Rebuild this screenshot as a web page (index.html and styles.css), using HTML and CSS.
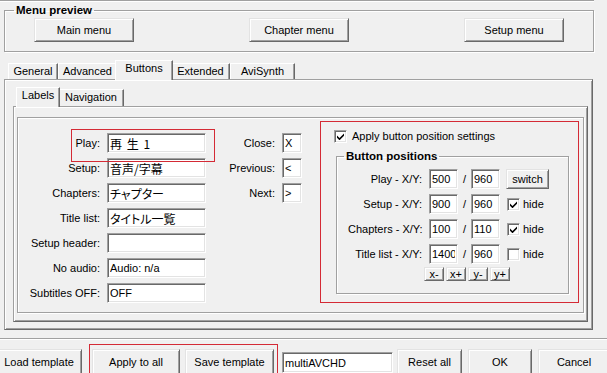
FILE: index.html
```html
<!DOCTYPE html>
<html lang="en">
<head>
<meta charset="utf-8">
<title>Menu preview</title>
<link rel="stylesheet" href="styles.css">
</head>
<body>
<div class="dialog">
  <div class="topline"></div>
  <fieldset class="group menu-preview">
    <legend>Menu preview</legend>
    <div class="preview-buttons">
      <button class="btn preview-btn">Main menu</button>
      <button class="btn preview-btn">Chapter menu</button>
      <button class="btn preview-btn">Setup menu</button>
    </div>
  </fieldset>

  <div class="tabs outer-tabs">
    <div class="tab tab-general">General</div>
    <div class="tab tab-advanced">Advanced</div>
    <div class="tab sel tab-buttons">Buttons</div>
    <div class="tab tab-extended">Extended</div>
    <div class="tab tab-avisynth">AviSynth</div>
  </div>

  <div class="panel outer-panel">
    <div class="tabs inner-tabs">
      <div class="tab sel tab-labels">Labels</div>
      <div class="tab tab-navigation">Navigation</div>
    </div>
    <div class="panel inner-panel">
      <div class="labels-box">
        <div class="form form-left">
          <label class="lbl">Play:</label><input class="field cjk" value="再 生 1">
          <label class="lbl">Setup:</label><input class="field cjk" value="音声/字幕">
          <label class="lbl">Chapters:</label><input class="field cjk" value="チャプター">
          <label class="lbl">Title list:</label><input class="field cjk" value="タイトル一覧">
          <label class="lbl">Setup header:</label><input class="field" value="">
          <label class="lbl">No audio:</label><input class="field" value="Audio: n/a">
          <label class="lbl">Subtitles OFF:</label><input class="field" value="OFF">
        </div>
        <div class="form form-mid">
          <label class="lbl">Close:</label><input class="field" value="X">
          <label class="lbl">Previous:</label><input class="field" value="&lt;">
          <label class="lbl">Next:</label><input class="field" value="&gt;">
        </div>
        <div class="positions">
          <div class="check-row">
            <span class="cb"><svg width="7" height="7" viewBox="0 0 7 7"><path d="M0 2.5 L2.5 5 L7 0.5 L7 2.8 L2.5 7.3 L0 4.8 Z" fill="#000"/></svg></span>
            <span>Apply button position settings</span>
          </div>
          <fieldset class="group pos-group">
            <legend>Button positions</legend>
            <div class="pos-body">
              <div class="pos-grid">
                <span class="plbl">Play - X/Y:</span><input class="field num" value="500"><span class="slash">/</span><input class="field num" value="960">
                <span class="pctl"><button class="btn switch-btn">switch</button></span>

                <span class="plbl">Setup - X/Y:</span><input class="field num" value="900"><span class="slash">/</span><input class="field num" value="960">
                <span class="pctl"><span class="hide"><span class="cb"><svg width="7" height="7" viewBox="0 0 7 7"><path d="M0 2.5 L2.5 5 L7 0.5 L7 2.8 L2.5 7.3 L0 4.8 Z" fill="#000"/></svg></span>hide</span></span>

                <span class="plbl">Chapters - X/Y:</span><input class="field num" value="100"><span class="slash">/</span><input class="field num" value="110">
                <span class="pctl"><span class="hide"><span class="cb"><svg width="7" height="7" viewBox="0 0 7 7"><path d="M0 2.5 L2.5 5 L7 0.5 L7 2.8 L2.5 7.3 L0 4.8 Z" fill="#000"/></svg></span>hide</span></span>

                <span class="plbl">Title list - X/Y:</span><input class="field num" value="1400"><span class="slash">/</span><input class="field num" value="960">
                <span class="pctl"><span class="hide"><span class="cb"></span>hide</span></span>
              </div>
              <div class="nudge">
                <button class="btn nudge-btn">x-</button>
                <button class="btn nudge-btn">x+</button>
                <button class="btn nudge-btn">y-</button>
                <button class="btn nudge-btn">y+</button>
              </div>
            </div>
          </fieldset>
        </div>
        <div class="mark mark-play"></div>
        <div class="mark mark-pos"></div>
      </div>
    </div>
  </div>

  <div class="separator"></div>

  <div class="footer">
    <button class="btn fbtn b-load">Load template</button>
    <button class="btn fbtn b-apply">Apply to all</button>
    <button class="btn fbtn b-save">Save template</button>
    <input class="field f-name" value="multiAVCHD">
    <button class="btn fbtn b-reset">Reset all</button>
    <button class="btn fbtn b-ok">OK</button>
    <button class="btn fbtn b-cancel">Cancel</button>
    <div class="mark mark-footer"></div>
  </div>
</div>
</body>
</html>
```
FILE: styles.css
```css
* { box-sizing: border-box; }
html, body { margin: 0; padding: 0; }
body {
  width: 607px;
  height: 373px;
  overflow: hidden;
  background: #f0f0f0;
  font-family: "Liberation Sans", Arial, sans-serif;
  font-size: 11px;
  line-height: 13px;
  color: #000;
}
.dialog { position: relative; }

.topline {
  width: 594px;
  height: 2px;
  border-top: 1px solid #a0a0a0;
  border-bottom: 1px solid #fff;
}

/* group boxes */
.group {
  margin: 0;
  padding: 0;
  min-inline-size: 0;
  border: 1px solid #a0a0a0;
  box-shadow: inset 1px 1px 0 #fff, 1px 1px 0 #fff;
}
.group > legend {
  padding: 0 2px;
  font-weight: bold;
  font-size: 11.5px;
  line-height: 14px;
}
.menu-preview { margin: 1px 0 0 4px; width: 590px; }
.menu-preview > legend { margin-left: 9px; }
.preview-buttons {
  display: flex;
  justify-content: space-between;
  padding: 1px 29px 9px;
}

/* buttons */
.btn {
  font: inherit;
  color: #000;
  background: #f0f0f0;
  padding: 0;
  margin: 0;
  border: 1px solid;
  border-color: #e3e3e3 #696969 #696969 #e3e3e3;
  box-shadow: inset 1px 1px 0 #fff, inset -1px -1px 0 #a0a0a0;
  height: 24px;
  border-radius: 0;
}
.preview-btn { width: 100px; }

/* tabs */
.tabs { display: flex; align-items: flex-end; }
.tab {
  height: 16px;
  padding-top: 1px;
  text-align: center;
  background: #f0f0f0;
  border-top: 1px solid #fff;
  border-left: 1px solid #fff;
  border-right: 1px solid #696969;
  box-shadow: inset -1px 0 0 #a0a0a0;
  white-space: nowrap;
}
.tab.sel {
  height: 20px;
  padding-top: 1px;
  margin: 0 -2px -1px;
  position: relative;
  z-index: 1;
}
.outer-tabs { height: 19px; margin-top: 8px; padding-left: 8px; }
.tab-general { width: 50px; }
.tab-advanced { width: 59px; }
.tab-buttons { width: 58px; }
.tab-extended { width: 59px; }
.tab-avisynth { width: 65px; }

.inner-tabs { height: 19px; padding-left: 5px; }
.inner-tabs .tab { height: 17px; padding-top: 1px; }
.inner-tabs .tab.sel { height: 20px; padding-top: 1px; }
.tab-labels { width: 44px; }
.tab-navigation { width: 66px; }

/* panels */
.panel {
  border: 1px solid;
  border-color: #a0a0a0 #696969 #696969 #a0a0a0;
  box-shadow: inset 1px 1px 0 #fff, inset -1px -1px 0 #a0a0a0;
}
.outer-panel { margin-left: 4px; width: 589px; padding: 7px 4px 7px 8px; }
.inner-panel { padding: 10px 3px 8px 3px; }

.labels-box {
  position: relative;
  display: flex;
  align-items: flex-start;
  padding: 11px 0 9px 4px;
  border: 1px solid #a0a0a0;
  box-shadow: inset 1px 1px 0 #fff, 1px 1px 0 #fff;
}

/* forms */
.form {
  display: grid;
  grid-auto-rows: 20px;
  row-gap: 5px;
  column-gap: 7px;
  align-items: center;
  margin-top: 4px;
}
.form-left { grid-template-columns: 78px 99px; }
.form-mid { grid-template-columns: 50px 20px; margin-left: 19px; }
.lbl { text-align: right; white-space: nowrap; }

.field {
  font: inherit;
  color: #000;
  background: #fff;
  width: 100%;
  height: 20px;
  margin: 0;
  padding: 0 2px;
  border: 1px solid;
  border-color: #a0a0a0 #fff #fff #a0a0a0;
  box-shadow: inset 1px 1px 0 #696969, inset -1px -1px 0 #e3e3e3;
  border-radius: 0;
  outline: none;
}
.cjk {
  font-family: "Noto Sans CJK JP", "Liberation Sans", sans-serif;
  font-size: 12px;
  font-feature-settings: "palt";
  word-spacing: 2px;
}

/* checkbox */
.cb {
  display: inline-flex;
  align-items: center;
  justify-content: center;
  flex: none;
  width: 13px;
  height: 13px;
  background: #fff;
  border: 1px solid;
  border-color: #a0a0a0 #fff #fff #a0a0a0;
  box-shadow: inset 1px 1px 0 #696969, inset -1px -1px 0 #e3e3e3;
}
.cb svg { display: block; }

/* right side */
.positions { margin-left: 32px; width: 235px; }
.check-row { display: flex; align-items: center; gap: 5px; height: 15px; }
.pos-group { margin: 5px 0 0 2px; width: 233px; }
.pos-group > legend { margin-left: 7px; }
.pos-body { padding: 6px 0 12px 11px; }
.pos-grid {
  display: grid;
  grid-template-columns: 81px 29px 13px 29px auto;
  grid-auto-rows: 20px;
  row-gap: 5px;
  align-items: center;
}
.plbl { text-align: right; padding-right: 7px; white-space: nowrap; }
.slash { text-align: center; }
.pctl { padding-left: 6px; display: flex; align-items: center; }
.switch-btn { width: 43px; height: 20px; }
.hide { display: flex; align-items: center; gap: 3px; margin-left: 1px; }
.nudge { display: flex; gap: 2px; margin: 3px 0 0 76px; }
.nudge-btn { width: 20px; height: 14px; line-height: 11px; }

/* footer */
.separator {
  height: 2px;
  margin-top: 8px;
  border-top: 1px solid #a0a0a0;
  border-bottom: 1px solid #fff;
}
.footer {
  position: relative;
  display: flex;
  align-items: flex-start;
  margin: 9px 0 0 -4px;
}
.fbtn { height: 26px; flex: none; }
.b-load { width: 86px; }
.b-apply { width: 88px; margin-left: 10px; }
.b-save { width: 89px; margin-left: 5px; }
.f-name { width: 111px; height: 21px; margin: 3px 0 0 8px; flex: none; }
.b-reset { width: 65px; margin-left: 4px; }
.b-ok { width: 64px; margin-left: 6px; }
.b-cancel { width: 72px; margin-left: 6px; }

/* red annotation frames */
.mark {
  position: absolute;
  border: 1px solid #d42a35;
  pointer-events: none;
}
.mark-play { left: 53px; top: 11px; width: 144px; height: 33px; }
.mark-pos { left: 302px; top: 3px; width: 259px; height: 182px; }
.mark-footer { left: 93px; top: -5px; width: 189px; height: 40px; }
```
